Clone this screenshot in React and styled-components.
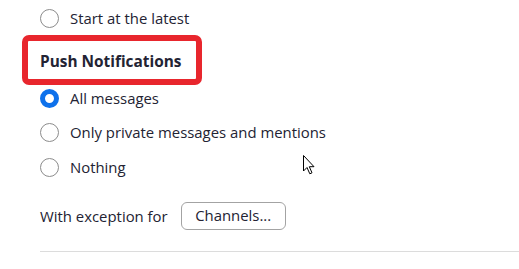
import styled, { createGlobalStyle } from "styled-components";

const Global = createGlobalStyle`
  body {
    margin: 0;
    background: #ffffff;
    font-family: "Open Sans", "Noto Sans", sans-serif;
    color: #232333;
  }
`;

const Page = styled.div`
  position: relative;
  width: 519px;
  height: 269px;
  overflow: hidden;
  padding-left: 40px;
  box-sizing: border-box;
`;

const Row = styled.label`
  display: flex;
  align-items: center;
  height: 20px;
  margin-top: ${(p) => p.$top}px;
  font-size: 14.9px;
  color: #232333;
  gap: 11px;
`;

const Radio = styled.span`
  width: 19px;
  height: 19px;
  box-sizing: border-box;
  border-radius: 50%;
  flex: none;
  border: ${(p) => (p.$checked ? "5px solid #0e71eb" : "1.5px solid #8c8c8c")};
  background: #fff;
`;

const Heading = styled.div`
  margin-top: 7px;
  margin-left: -18px;
  width: 180px;
  height: 50px;
  box-sizing: border-box;
  border: 6px solid #e8262d;
  border-radius: 7px;
  padding: 3px 0 0 12px;
  display: flex;
  align-items: center;
  font-weight: 700;
  font-size: 15.4px;
  color: #232333;
`;

const Exception = styled.div`
  display: flex;
  align-items: center;
  margin-top: 25px;
  font-size: 14.9px;
  gap: 13px;
`;

const Button = styled.button`
  width: 105px;
  height: 28px;
  border: 1px solid #a3a3a3;
  border-radius: 6px;
  background: #fff;
  font-family: inherit;
  font-size: 14.9px;
  color: #232333;
  padding: 0 0 2px;
`;

const Divider = styled.hr`
  margin: 21px 0 0;
  border: none;
  border-top: 1.5px solid #dcdcdc;
`;

const Cursor = styled.svg`
  position: absolute;
  left: 302px;
  top: 154px;
`;

export default function App() {
  return (
    <Page>
      <Global />
      <Row $top={8}>
        <Radio />
        Start at the latest
      </Row>
      <Heading>Push Notifications</Heading>
      <Row $top={3}>
        <Radio $checked />
        All messages
      </Row>
      <Row $top={14}>
        <Radio />
        Only private messages and mentions
      </Row>
      <Row $top={15}>
        <Radio />
        Nothing
      </Row>
      <Exception>
        With exception for
        <Button>Channels...</Button>
      </Exception>
      <Divider />
      <Cursor width="14" height="22" viewBox="0 0 14 22">
        <path
          d="M1.5 1.5 L1.5 17 L5 13.5 L7.8 19.8 L10 18.8 L7.3 12.7 L12 12.7 Z"
          fill="#fff"
          stroke="#000"
          strokeWidth="1"
          strokeLinejoin="miter"
        />
      </Cursor>
    </Page>
  );
}
